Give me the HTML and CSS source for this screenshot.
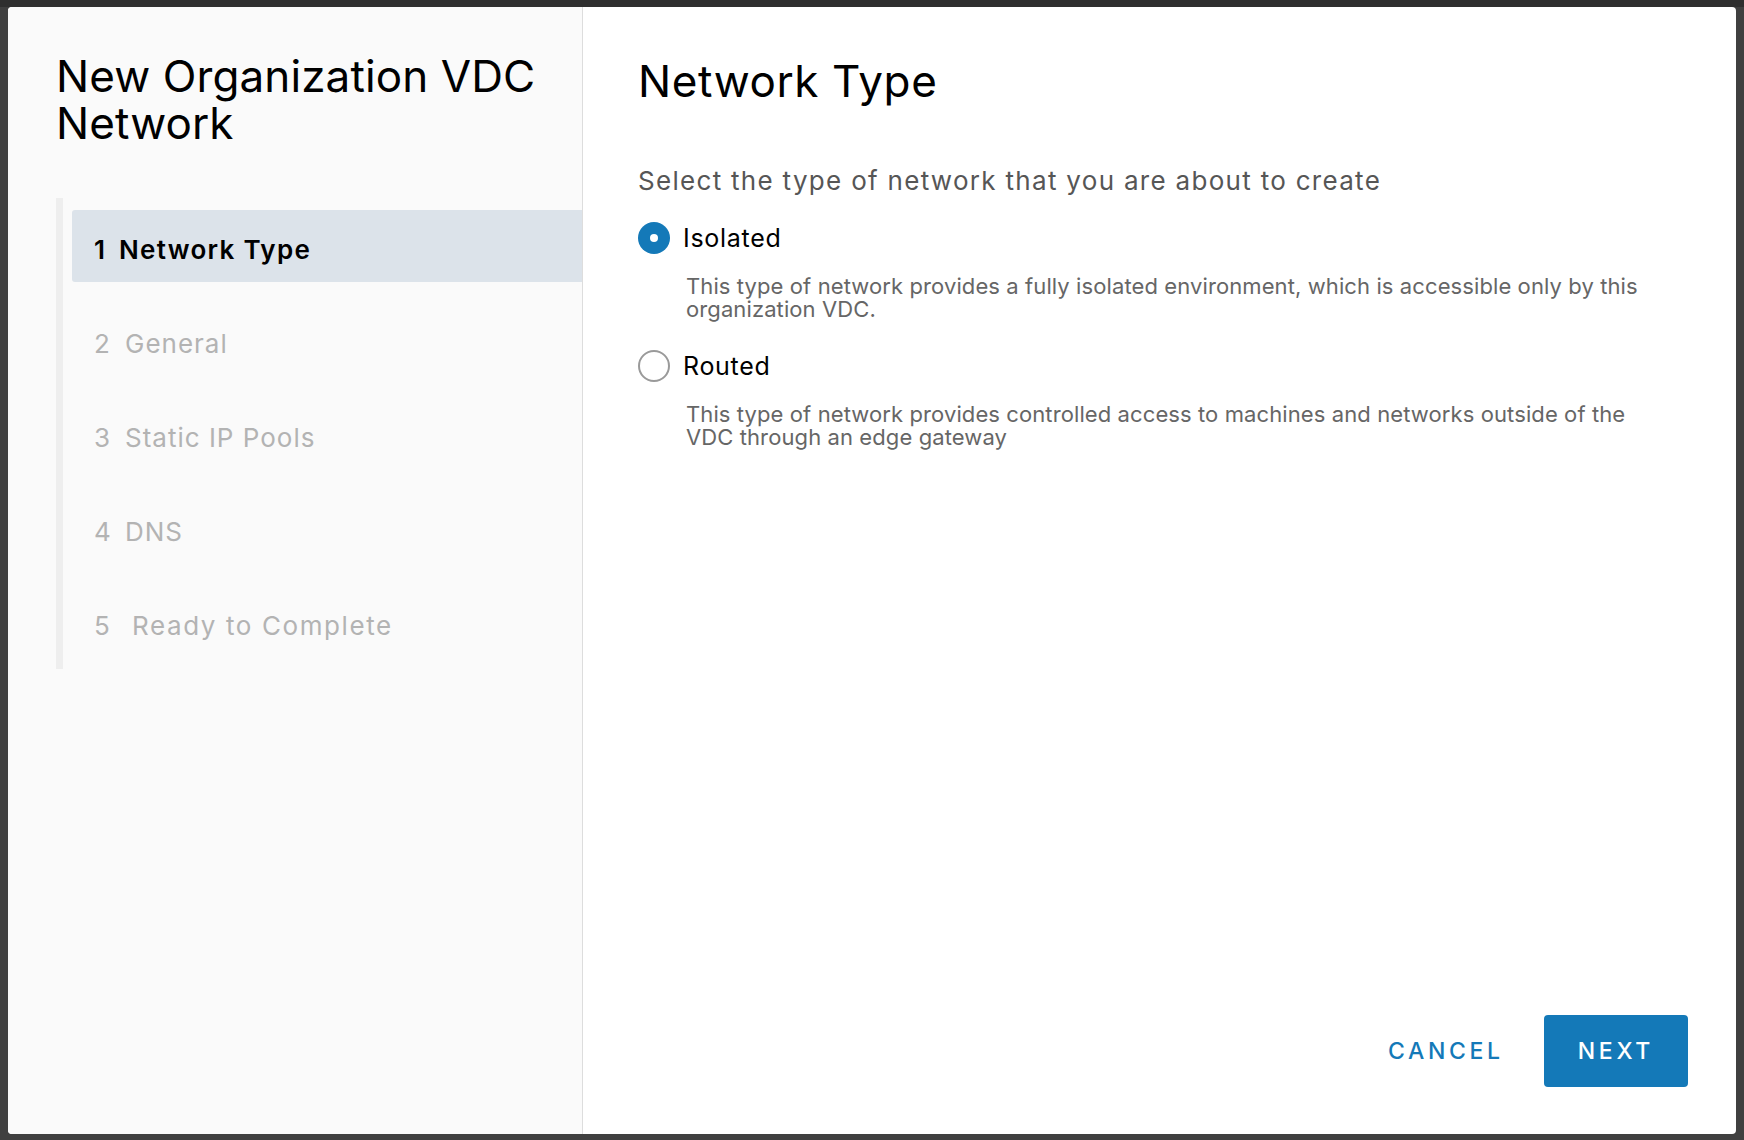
FILE: index.html
```html
<!DOCTYPE html>
<html lang="en">
<head>
<meta charset="utf-8">
<title>New Organization VDC Network</title>
<link rel="stylesheet" href="styles.css">
</head>
<body>
<div class="backdrop">
  <div class="modal">
    <aside class="wizard-side">
      <h1 class="wizard-title">New Organization VDC<br>Network</h1>
      <nav class="stepnav">
        <div class="step step-active"><span class="step-num">1</span><span class="step-label">Network Type</span></div>
        <div class="step"><span class="step-num">2</span><span class="step-label step-label-gap">General</span></div>
        <div class="step"><span class="step-num">3</span><span class="step-label step-label-gap">Static IP Pools</span></div>
        <div class="step"><span class="step-num">4</span><span class="step-label step-label-gap">DNS</span></div>
        <div class="step"><span class="step-num">5</span><span class="step-label step-label-wide">Ready to Complete</span></div>
      </nav>
    </aside>
    <section class="wizard-main">
      <div class="wizard-content">
        <h2 class="page-title">Network Type</h2>
        <p class="page-subtitle">Select the type of network that you are about to create</p>
        <div class="radio-row">
          <span class="radio radio-checked"></span>
          <span class="radio-label">Isolated</span>
        </div>
        <p class="radio-desc">This type of network provides a fully isolated environment, which is accessible only by this<br>organization VDC.</p>
        <div class="radio-row radio-row-next">
          <span class="radio"></span>
          <span class="radio-label">Routed</span>
        </div>
        <p class="radio-desc">This type of network provides controlled access to machines and networks outside of the<br>VDC through an edge gateway</p>
      </div>
      <footer class="wizard-footer">
        <button class="btn btn-link">Cancel</button>
        <button class="btn btn-primary">Next</button>
      </footer>
    </section>
  </div>
</div>
</body>
</html>
```

FILE: styles.css
```css
* {
  box-sizing: border-box;
}

html, body {
  margin: 0;
  padding: 0;
}

body {
  width: 1744px;
  height: 1140px;
  overflow: hidden;
  font-family: "Inter", "Lato", "Noto Sans", sans-serif;
  background: linear-gradient(#2f2f2f 0, #2f2f2f 7px, #404040 7px, #404040 100%);
}

.backdrop {
  height: 1140px;
  padding: 7px 8px 6px 8px;
  display: flex;
}

.modal {
  flex: 1;
  display: flex;
  border-radius: 4px;
  overflow: hidden;
  background: #ffffff;
}

/* ---------- left side ---------- */
.wizard-side {
  width: 575px;
  flex: none;
  background: #fafafa;
  border-right: 1px solid #dddddd;
  padding: 46px 0 0 48px;
}

.wizard-title {
  margin: 0;
  font-size: 44px;
  line-height: 47px;
  font-weight: 400;
  color: #000000;
  letter-spacing: 0.1px;
}

.stepnav {
  margin-top: 51px;
  border-left: 7px solid #eeeeee;
  padding: 12px 0 11px 9px;
  display: flex;
  flex-direction: column;
  gap: 22px;
}

.step {
  height: 72px;
  display: flex;
  align-items: center;
  padding: 6px 0 0 22px;
  font-size: 26px;
  letter-spacing: 1px;
  color: #b3b3b3;
  border-radius: 3px 0 0 3px;
}

.step-active {
  background: #dce3ea;
  color: #000000;
  font-weight: 600;
  letter-spacing: 1.3px;
}

.step-num {
  display: inline-block;
  width: 15px;
}

.step-label {
  margin-left: 10px;
}

.step-label-gap {
  margin-left: 16px;
}

.step-label-wide {
  margin-left: 23px;
  letter-spacing: 1.6px;
}

/* ---------- right side ---------- */
.wizard-main {
  flex: 1;
  display: flex;
  flex-direction: column;
  padding: 50px 0 0 55px;
}

.wizard-content {
  flex: 1;
}

.page-title {
  margin: 0;
  font-size: 44px;
  line-height: 48px;
  font-weight: 400;
  color: #000000;
  letter-spacing: 0.6px;
}

.page-subtitle {
  margin: 61px 0 0 0;
  font-size: 26px;
  line-height: 30px;
  letter-spacing: 1.3px;
  color: #565656;
}

.radio-row {
  margin-top: 26px;
  display: flex;
  align-items: center;
  height: 32px;
}

.radio-row-next {
  margin-top: 29px;
}

.radio {
  width: 32px;
  height: 32px;
  border-radius: 50%;
  border: 2px solid #9a9a9a;
  background: #ffffff;
  display: flex;
  align-items: center;
  justify-content: center;
  flex: none;
}

.radio-checked {
  border: none;
  background: #1479b8;
}

.radio-checked::after {
  content: "";
  width: 8px;
  height: 8px;
  border-radius: 50%;
  background: #ffffff;
}

.radio-label {
  margin-left: 13px;
  font-size: 25px;
  letter-spacing: 0.7px;
  color: #000000;
}

.radio-desc {
  margin: 21px 0 0 48px;
  font-size: 22px;
  line-height: 23px;
  letter-spacing: 0.1px;
  color: #666666;
  white-space: nowrap;
}

.wizard-footer {
  display: flex;
  justify-content: flex-end;
  align-items: center;
  gap: 6px;
  padding: 0 48px 47px 0;
}

.btn {
  height: 72px;
  padding: 0 34px;
  border: none;
  border-radius: 4px;
  font-family: "Inter", "Lato", sans-serif;
  font-size: 23px;
  font-weight: 500;
  letter-spacing: 0.16em;
  text-transform: uppercase;
  cursor: pointer;
}

.btn-link {
  background: transparent;
  color: #1479b8;
}

.btn-primary {
  background: #1479b8;
  color: #ffffff;
}
```
